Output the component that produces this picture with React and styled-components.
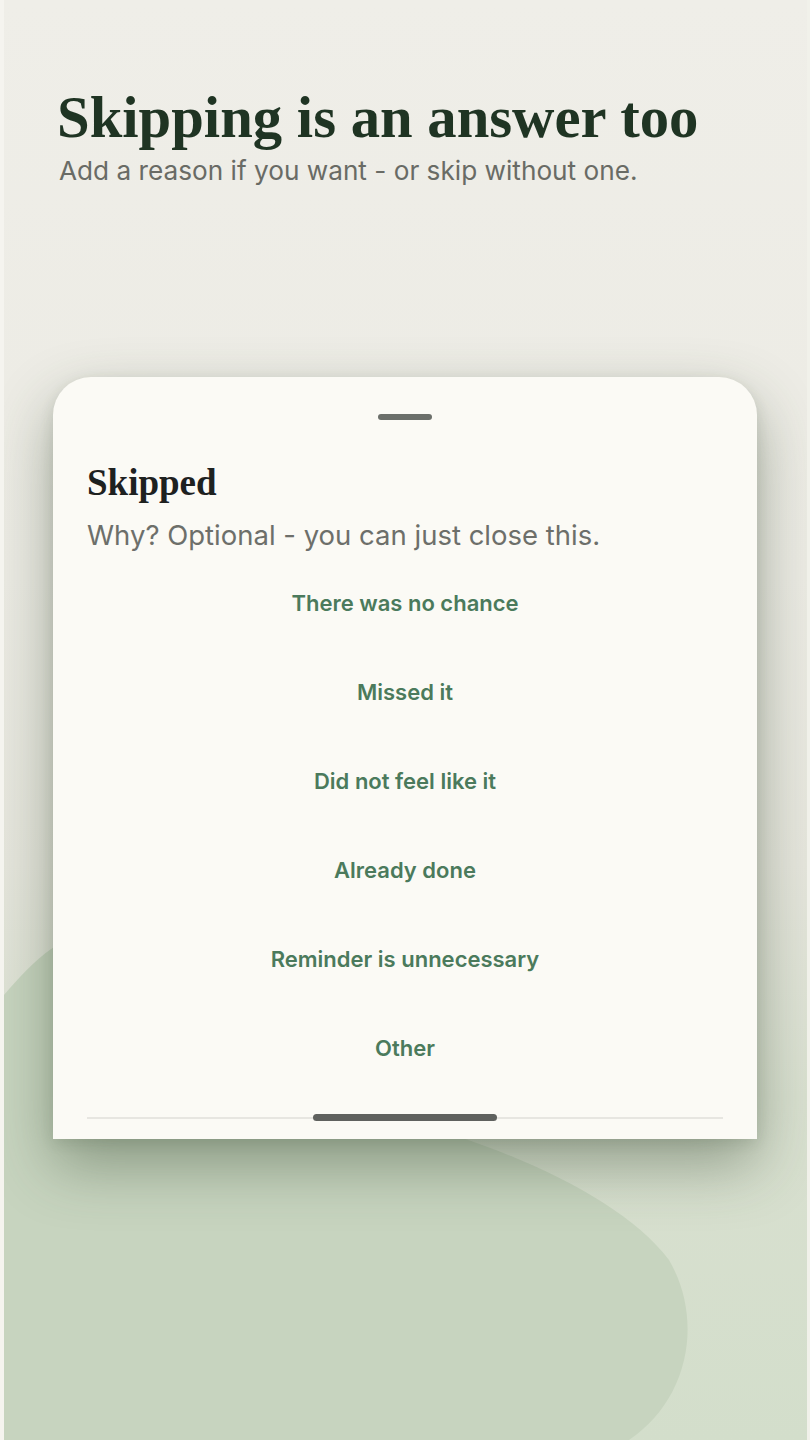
import React from "react";
import styled, { createGlobalStyle } from "styled-components";

const Global = createGlobalStyle`
  html, body { margin: 0; padding: 0; }
  body { background: #f3f2ed; font-family: Inter, "Noto Sans", sans-serif; }
  * { box-sizing: border-box; }
`;

const Frame = styled.div`
  position: relative;
  width: 810px;
  height: 1440px;
  overflow: hidden;
  border-left: 4px solid #f5f4ef;
  border-right: 3px solid #f1f1ea;
  background: linear-gradient(
    180deg,
    #efeee8 0%,
    #ecebe4 40%,
    #e6e6dd 60%,
    #d9e0d0 76%,
    #d3decb 100%
  );
`;

const Backdrop = styled.svg`
  position: absolute;
  inset: 0;
  width: 100%;
  height: 100%;
  pointer-events: none;
`;

const Content = styled.div`
  position: relative;
  display: flex;
  flex-direction: column;
  padding: 86px 0 0 0;
`;

const Header = styled.header`
  display: flex;
  flex-direction: column;
  padding: 0 0 0 53px;
  gap: 5px;
`;

const Headline = styled.h1`
  margin: 0;
  font-family: "Liberation Serif", "DejaVu Serif", serif;
  font-weight: 700;
  font-size: 58.7px;
  line-height: 64px;
  color: #1f3423;
`;

const Lede = styled.p`
  margin: 0 0 0 2px;
  font-size: 26.2px;
  line-height: 32px;
  color: #696b65;
`;

const Sheet = styled.section`
  margin: 190px 0 0 49px;
  width: 704px;
  background: #fbfaf5;
  border-radius: 38px 38px 0 0;
  box-shadow: 0 26px 60px rgba(50, 68, 45, 0.42), 0 4px 14px rgba(50, 65, 45, 0.12);
  padding: 0 34px;
  display: flex;
  flex-direction: column;
`;

const Grabber = styled.div`
  align-self: center;
  margin-top: 37px;
  width: 54px;
  height: 6px;
  border-radius: 3px;
  background: #6b6f6a;
`;

const SheetTitle = styled.h2`
  margin: 43px 0 0 0;
  font-family: "Liberation Serif", "DejaVu Serif", serif;
  font-weight: 700;
  font-size: 37px;
  line-height: 40px;
  color: #1e211f;
`;

const SheetHint = styled.p`
  margin: 15px 0 0 0;
  font-size: 27.5px;
  line-height: 34px;
  color: #6d6f6a;
`;

const Options = styled.ul`
  list-style: none;
  margin: 6px 0 0 0;
  padding: 0;
  display: flex;
  flex-direction: column;
`;

const Option = styled.li`
  height: 89px;
  display: flex;
  align-items: center;
  justify-content: center;
  font-size: 22px;
  font-weight: 600;
  color: #4b7a5c;
`;

const Footer = styled.div`
  position: relative;
  height: 47px;
`;

const Divider = styled.div`
  position: absolute;
  left: 0;
  right: 0;
  top: 25px;
  height: 2px;
  background: #e7e6e1;
`;

const HomeBar = styled.div`
  position: absolute;
  left: 50%;
  top: 22px;
  transform: translateX(-50%);
  width: 184px;
  height: 7px;
  border-radius: 4px;
  background: #5f615e;
`;

const reasons = [
  "There was no chance",
  "Missed it",
  "Did not feel like it",
  "Already done",
  "Reminder is unnecessary",
  "Other",
];

export default function App() {
  return (
    <>
      <Global />
      <Frame>
        <Backdrop viewBox="0 0 803 1440" preserveAspectRatio="none">
          <path
            d="M0 995 C 30 960, 60 930, 110 925 L 400 1120 C 510 1150, 620 1200, 665 1260 C 700 1320, 685 1400, 625 1440 L 0 1440 Z"
            fill="#c7d4bf"
          />
        </Backdrop>
        <Content>
          <Header>
            <Headline>Skipping is an answer too</Headline>
            <Lede>Add a reason if you want - or skip without one.</Lede>
          </Header>
          <Sheet>
            <Grabber />
            <SheetTitle>Skipped</SheetTitle>
            <SheetHint>Why? Optional - you can just close this.</SheetHint>
            <Options>
              {reasons.map((r) => (
                <Option key={r}>{r}</Option>
              ))}
            </Options>
            <Footer>
              <Divider />
              <HomeBar />
            </Footer>
          </Sheet>
        </Content>
      </Frame>
    </>
  );
}
